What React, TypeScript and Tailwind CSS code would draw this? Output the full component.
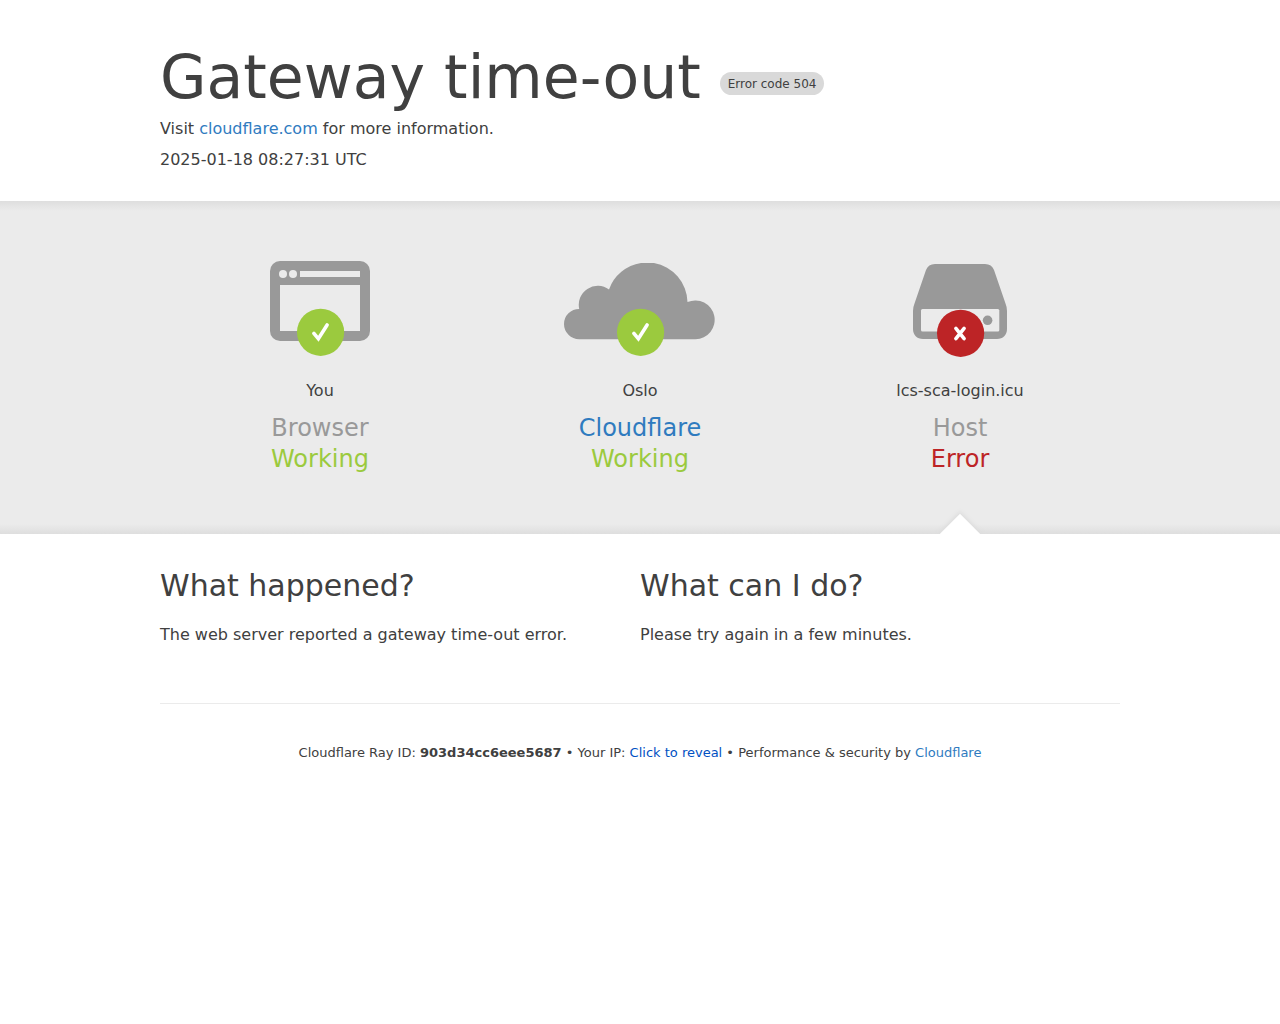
import { type ReactNode } from 'react';

type StatusColumnProps = {
    icon: ReactNode;
    place: string;
    name: ReactNode;
    status: string;
    failed?: boolean;
};

const OkBadge = ({ cx }: { cx: number }) => (
    <g>
        <circle cx={cx} cy="71.3" r="23.6" fill="#9bca3e" />
        <path
            d={`M${cx - 6.7} 72.3 L${cx - 2.2} 77.8 L${cx + 6.5} 64`}
            fill="none"
            stroke="#fff"
            strokeWidth="3.6"
            strokeLinecap="round"
        />
    </g>
);

const BrowserIcon = () => (
    <svg width="100" height="96" viewBox="0 0 100 96" aria-hidden="true">
        <rect width="100" height="80" rx="10" fill="#999" />
        <circle cx="13" cy="13" r="4" fill="#ebebeb" />
        <circle cx="23" cy="13" r="4" fill="#ebebeb" />
        <path d="M30 10H90V16H30ZM10 24H90V70H10Z" fill="#ebebeb" />
        <OkBadge cx={50.6} />
    </svg>
);

const CloudIcon = () => (
    <svg width="152" height="96" viewBox="0 0 152 96" aria-hidden="true">
        <path
            d="M15.2 78.3A15.2 15.2 0 0 1 15.2 47.9A19 19 0 0 1 45 28.5A40.5 40.5 0 0 1 77 2H90A40.5 40.5 0 0 1 123.5 41A19.45 19.45 0 1 1 131.5 78.3Z"
            fill="#999"
        />
        <OkBadge cx={76.6} />
    </svg>
);

const ServerIcon = () => (
    <svg width="96" height="96" viewBox="0 0 96 96" aria-hidden="true">
        <path
            d="M23 3H73C77.5 3 80.5 5 82 9L93.5 42.5Q95 46 95 50V68C95 74 91 78 85 78H11C5 78 1 74 1 68V50Q1 46 2.5 42.5L14 9C15.5 5 18.5 3 23 3Z"
            fill="#999"
        />
        <rect x="9" y="48" width="78.3" height="22.5" rx="1.5" fill="#ebebeb" />
        <circle cx="75.6" cy="59.3" r="4.8" fill="#999" />
        <circle cx="48.6" cy="72.3" r="23.6" fill="#bd2426" />
        <path
            d="M43.9 67.4L52.1 77.6M52.1 67.4L43.9 77.6"
            stroke="#fff"
            strokeWidth="3.6"
            strokeLinecap="round"
        />
    </svg>
);

const StatusColumn = ({ icon, place, name, status, failed = false }: StatusColumnProps) => (
    <div className="relative flex flex-1 flex-col items-center pt-15 pb-[59px]">
        {icon}
        <span className="mt-[22px] leading-6">{place}</span>
        <h3 className="mt-[10px] text-2xl leading-[31px] text-[#999]">{name}</h3>
        <span className={`text-2xl leading-[31px] ${failed ? 'text-[#bd2426]' : 'text-[#9bca3e]'}`}>{status}</span>
        {/* Pointer under the part that failed */}
        {failed && <div className="absolute -bottom-4 size-[30px] rotate-45 bg-white shadow-[0_0_4px_2px_#dedede]" />}
    </div>
);

export default function App() {
    return (
        <div className="font-['DejaVu_Sans',sans-serif] text-base text-[#404040]">
            {/* Header */}
            <header className="mx-auto mb-[29px] w-full max-w-[960px] pt-10">
                <div className="flex flex-wrap items-center gap-x-[19px]">
                    <h1 className="text-[60px] leading-[75px]">Gateway time-out</h1>
                    <span className="mt-3 rounded-full bg-[#d9d9d9] px-2 pt-1 pb-[3px] text-xs leading-4">
                        Error code 504
                    </span>
                </div>
                <p className="mt-0.5 leading-6">
                    Visit{' '}
                    <a href="#" className="text-[#2f7bbf]">
                        cloudflare.com
                    </a>{' '}
                    for more information.
                </p>
                <p className="mt-[7px] leading-6">2025-01-18 08:27:31 UTC</p>
            </header>

            {/* Connection status */}
            <section className="overflow-hidden bg-[linear-gradient(to_bottom,#dedede,#ebebeb_3%,#ebebeb_97%,#dedede)]">
                <div className="mx-auto flex w-full max-w-[960px]">
                    <StatusColumn icon={<BrowserIcon />} place="You" name="Browser" status="Working" />
                    <StatusColumn
                        icon={<CloudIcon />}
                        place="Oslo"
                        name={
                            <a href="#" className="text-[#2f7bbf]">
                                Cloudflare
                            </a>
                        }
                        status="Working"
                    />
                    <StatusColumn icon={<ServerIcon />} place="lcs-sca-login.icu" name="Host" status="Error" failed />
                </div>
            </section>

            {/* Explanation */}
            <main className="mx-auto flex w-full max-w-[960px] pt-8">
                <div className="flex-1">
                    <h2 className="text-3xl leading-[39px]">What happened?</h2>
                    <p className="mt-[18px] leading-6">The web server reported a gateway time-out error.</p>
                </div>
                <div className="flex-1">
                    <h2 className="text-3xl leading-[39px]">What can I do?</h2>
                    <p className="mt-[18px] leading-6">Please try again in a few minutes.</p>
                </div>
            </main>

            {/* Footer */}
            <footer className="mx-auto mt-14 w-full max-w-[960px] border-t border-[#ebebeb] py-[39px] text-center text-[13px] leading-5">
                <span>
                    Cloudflare Ray ID: <strong className="font-semibold">903d34cc6eee5687</strong>
                </span>
                <span> • </span>
                <span>
                    Your IP:{' '}
                    <button type="button" className="text-[#0051c3]">
                        Click to reveal
                    </button>
                </span>
                <span> • </span>
                <span>
                    Performance &amp; security by{' '}
                    <a href="#" className="text-[#2f7bbf]">
                        Cloudflare
                    </a>
                </span>
            </footer>
        </div>
    );
}
